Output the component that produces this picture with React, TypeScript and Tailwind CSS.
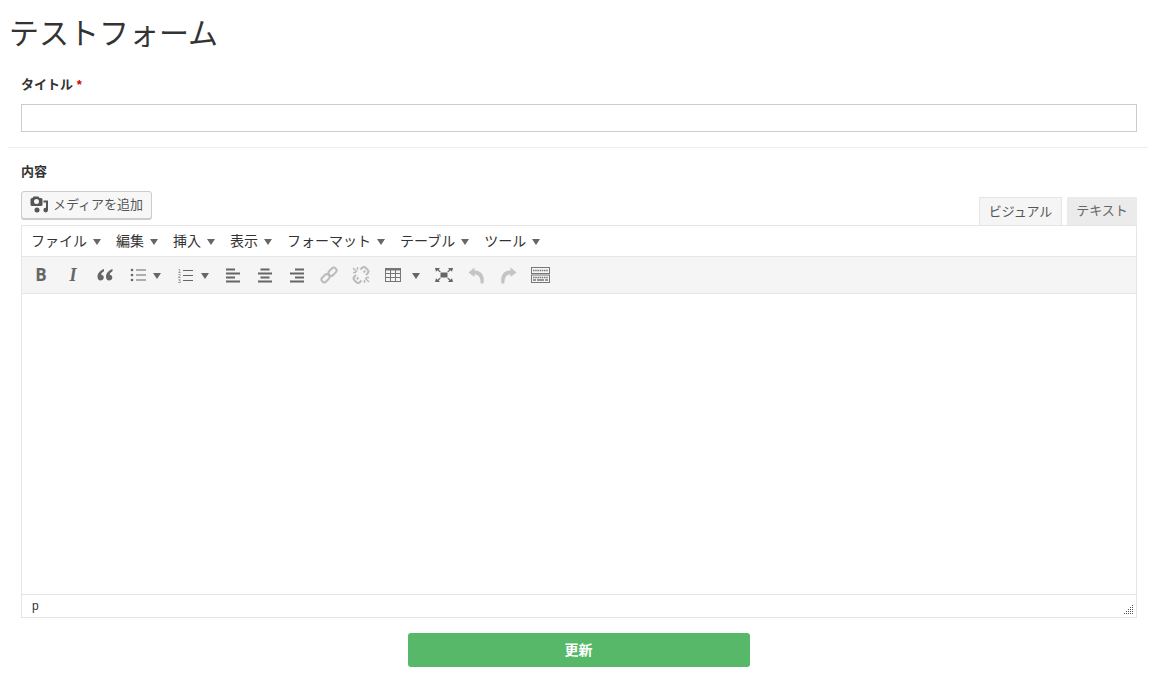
import React from "react";

const cjk = "font-['Liberation_Sans','Noto_Sans_CJK_JP',sans-serif]";

const Caret = () => <span className="w-0 h-0 border-x-[4px] border-x-transparent border-t-[6px] border-t-[#666] mt-[1px]" />;

const AlignIcon = ({ shortX }: { shortX: number }) => (
  <svg width="16" height="15" viewBox="0 0 16 15" fill="#666">
    <rect x={shortX} y="0.500" width="9" height="2" />
    <rect x="1" y="4.500" width="14" height="2" />
    <rect x={shortX} y="8.500" width="9" height="2" />
    <rect x="1" y="12.500" width="14" height="2" />
  </svg>
);

const BulletIcon = () => (
  <svg width="16" height="14" viewBox="0 0 16 14" fill="#666">
    <circle cx="2" cy="2" r="1.300" />
    <circle cx="2" cy="7" r="1.300" />
    <circle cx="2" cy="12" r="1.300" />
    <rect x="6" y="1.500" width="10" height="1" />
    <rect x="6" y="6.500" width="10" height="1" />
    <rect x="6" y="11.500" width="10" height="1" />
  </svg>
);

const NumberIcon = () => (
  <svg width="16" height="15" viewBox="0 0 16 15" fill="#666">
    <text x="0" y="4.500" fontSize="5" fontFamily="Liberation Sans">1</text>
    <text x="0" y="9.500" fontSize="5" fontFamily="Liberation Sans">2</text>
    <text x="0" y="14.500" fontSize="5" fontFamily="Liberation Sans">3</text>
    <rect x="5" y="2" width="10" height="1" />
    <rect x="5" y="7" width="10" height="1" />
    <rect x="5" y="12" width="10" height="1" />
  </svg>
);

const QuoteIcon = () => (
  <svg width="16" height="12" viewBox="0 0 16 12" fill="#666">
    <path d="M7 0C3.500 1.500.500 4 .500 7.500c0 2.500 1.300 4 3 4S6.800 10.300 6.800 8.500 5.500 5.800 4.200 5.800C4.200 4.300 5.500 3 7 2.300z" />
    <path d="M15.500 0C12 1.500 9 4 9 7.500c0 2.500 1.300 4 3 4s3.300-1.200 3.300-3S14 5.800 12.700 5.800c0-1.500 1.300-2.800 2.800-3.500z" />
  </svg>
);

const LinkIcon = () => (
  <svg width="18" height="18" viewBox="0 0 18 18" fill="none" stroke="#bbb" strokeWidth="2">
    <rect x="1" y="9.500" width="9" height="5.500" rx="2.700" transform="rotate(-45 5.500 12.200)" />
    <rect x="8" y="3" width="9" height="5.500" rx="2.700" transform="rotate(-45 12.500 5.700)" />
  </svg>
);

const UnlinkIcon = () => (
  <svg width="18" height="18" viewBox="0 0 18 18" fill="none" stroke="#bbb" strokeWidth="2">
    <path d="M6.500 11.500 4.800 13.200M4 9 2.500 10.500a2.700 2.700 0 0 0 0 3.800l1.700 1.700a2.700 2.700 0 0 0 3.800 0L9.500 14.500" />
    <path d="M11.500 6.500 13.200 4.800M14 9l1.500-1.500a2.700 2.700 0 0 0 0-3.800L13.800 2a2.700 2.700 0 0 0-3.800 0L8.500 3.500" />
    <path d="M1 2l4 4M1 6.500h3M5.500 1v3M17 16l-4-4M17 11.500h-3M12.500 17v-3" strokeWidth="1.500" />
  </svg>
);

const TableIcon = () => (
  <svg width="16" height="14" viewBox="0 0 16 14" fill="none" stroke="#777">
    <rect x=".5" y=".5" width="15" height="13" />
    <path d="M.5 1.500h15" strokeWidth="2" />
    <path d="M.5 5.500h15M.5 9.500h15M5.500 .5v13M10.500 .5v13" />
  </svg>
);

const FullscreenIcon = () => (
  <svg width="18" height="14" viewBox="0 0 18 14" fill="#666">
    <rect x="5.500" y="4.500" width="7" height="5" />
    <path d="M0 0h5L3.600 1.400 5.800 3.500 4.800 4.300 2.500 2.300 1 3.800zM18 0h-5l1.400 1.400-2.200 2.100 1 .8 2.300-2L17 3.800zM0 14h5l-1.400-1.400 2.200-2.100-1-.8-2.300 2L1 10.200zM18 14h-5l1.400-1.400-2.200-2.100 1-.8 2.300 2 1.500-1.500z" />
  </svg>
);

const UndoIcon = ({ flip }: { flip?: boolean }) => (
  <svg width="17" height="17" viewBox="0 0 17 17" fill="#c4c4c4" className={flip ? "-scale-x-100" : ""}>
    <path d="M6.500 0.500 0.500 5.500 6.500 10V7.500c3 0 4.500 1.500 5.300 3.500.6 1.500.8 3 .8 5.500h3c.5-4 .2-7-1.500-9.500C12.800 4.800 10 3.500 6.500 3.500z" />
  </svg>
);

const KeyboardIcon = () => (
  <svg width="19" height="16" viewBox="0 0 19 16" fill="none" stroke="#777">
    <rect x=".5" y=".5" width="18" height="6" />
    <rect x=".5" y="8" width="18" height="7.500" />
    <path d="M2 3.500h15M2 10.500h15" strokeWidth="1.600" strokeDasharray="1.500 .7" />
    <path d="M2 13h3M6 13h7M14 13h3" strokeWidth="1.600" />
  </svg>
);

const MediaIcon = () => (
  <svg width="18" height="18" viewBox="0 0 18 18" fill="#555">
    <path
      fillRule="evenodd"
      d="M3.500 0.500h5l1 1.500h1.500a1.500 1.500 0 0 1 1.500 1.500v5a1.500 1.500 0 0 1-1.500 1.500h-9A1.500 1.500 0 0 1 .500 8.500v-5A1.500 1.500 0 0 1 2 2h.5zM6.500 3a2.500 2.500 0 1 0 0 5 2.500 2.500 0 0 0 0-5z"
    />
    <circle cx="7" cy="14" r="2.500" />
    <path d="M13.500 4.500H18v9.500a2.300 2.300 0 1 1-2-2.200V6.500h-2.500z" />
  </svg>
);

const menus = ["ファイル", "編集", "挿入", "表示", "フォーマット", "テーブル", "ツール"];

const Btn = ({ children }: { children: React.ReactNode }) => (
  <div className="flex items-center justify-center h-full w-8">{children}</div>
);

export default function App() {
  return (
    <div className={`${cjk} w-[1159px] h-[690px] bg-white text-[#333] overflow-hidden`}>
      <h1 className="pl-[9px] pt-[13px] text-[30px] leading-[42px] font-normal text-[#333]">テストフォーム</h1>

      <div className="mx-[8px] w-[1140px] border-b border-[#eee] px-[13px] pt-[20px] pb-[15px]">
        <label className="block text-[13px] leading-[20px] font-bold">
          タイトル <span className="text-[#c00]">*</span>
        </label>
        <input className="block mt-[9px] w-[1116px] h-[28px] border border-[#ccc] bg-white" />
      </div>

      <div className="pl-[21px] w-[1137px]">
        <label className="block pt-[14px] text-[13px] leading-[20px] font-bold">内容</label>

        <div className="flex items-end justify-between mt-[9px] h-[34px]">
          <button className="self-start flex items-center gap-[5px] h-[28px] w-[131px] pl-[8px] rounded-[3px] border border-[#ccc] bg-[#f7f7f7] text-[13px] text-[#555] shadow-[0_1px_0_#ccc]">
            <MediaIcon />
            <span>メディアを追加</span>
          </button>
          <div className="flex items-end gap-[5px]">
            <div className="flex items-center justify-center w-[83px] h-[28px] border border-b-0 border-[#e5e5e5] bg-[#f5f5f5] text-[13px] text-[#555]">ビジュアル</div>
            <div className="flex items-center justify-center w-[70px] h-[28px] bg-[#ebebeb] text-[13px] text-[#666]">テキスト</div>
          </div>
        </div>

        <div className="w-[1116px] h-[393px] border border-[#e5e5e5] flex flex-col bg-white">
          <div className="flex items-center gap-[10px] h-[30px] pl-[9px] text-[14px] text-[#333]">
            {menus.map((m) => (
              <div key={m} className="flex items-center gap-[6px] mr-[5px]">
                <span>{m}</span>
                <Caret />
              </div>
            ))}
          </div>

          <div className="flex items-center h-[38px] pl-[3px] bg-[#f5f5f5] border-y border-[#e5e5e5]">
            <Btn><span className="text-[17px] font-bold font-['Open_Sans',sans-serif] text-[#666]">B</span></Btn>
            <Btn><span className="text-[18px] font-['Liberation_Serif',serif] italic font-bold text-[#666]">I</span></Btn>
            <Btn><QuoteIcon /></Btn>
            <div className="flex items-center w-[48px] h-full">
              <div className="w-8 flex justify-center pl-[2px]"><BulletIcon /></div>
              <Caret />
            </div>
            <div className="flex items-center w-[48px] h-full">
              <div className="w-8 flex justify-center pl-[1px]"><NumberIcon /></div>
              <Caret />
            </div>
            <Btn><AlignIcon shortX={1} /></Btn>
            <Btn><AlignIcon shortX={3.500} /></Btn>
            <Btn><AlignIcon shortX={6} /></Btn>
            <Btn><LinkIcon /></Btn>
            <Btn><UnlinkIcon /></Btn>
            <div className="flex items-center w-[51px] h-full">
              <div className="w-8 flex justify-center"><TableIcon /></div>
              <div className="pl-[3px] flex"><Caret /></div>
            </div>
            <Btn><FullscreenIcon /></Btn>
            <Btn><UndoIcon /></Btn>
            <Btn><UndoIcon flip /></Btn>
            <Btn><KeyboardIcon /></Btn>
          </div>

          <div className="flex-1" />

          <div className="relative flex items-center h-[23px] pl-[10px] border-t border-[#e5e5e5] text-[12px] text-[#333]">
            p
            <svg width="10" height="10" viewBox="0 0 10 10" fill="#555" className="absolute right-[2px] bottom-[2px]">
              {[[8, 0], [8, 2], [8, 4], [8, 6], [8, 8], [6, 2], [6, 4], [6, 6], [6, 8], [4, 4], [4, 6], [4, 8], [2, 6], [2, 8], [0, 8]].map(([x, y], i) => (
                <rect key={i} x={x} y={y} width="1" height="1" />
              ))}
            </svg>
          </div>
        </div>
      </div>

      <div className="flex justify-center mt-[15px] pr-[2px]">
        <button className="w-[342px] h-[34px] rounded-[3px] bg-[#56b868] text-white text-[14px] font-bold">更新</button>
      </div>
    </div>
  );
}
